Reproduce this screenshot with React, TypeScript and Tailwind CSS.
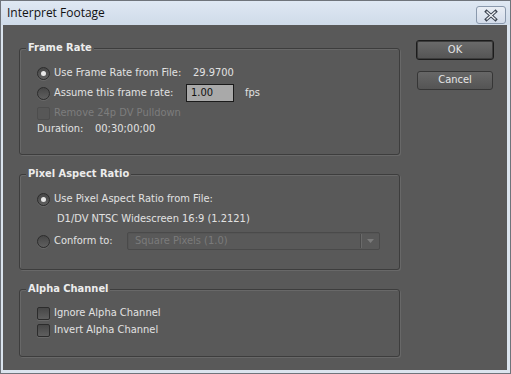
import React from "react";

const font = { fontFamily: "'DejaVu Sans Condensed', 'Liberation Sans', sans-serif" };

function Radio({ checked }: { checked?: boolean }) {
  return (
    <span className="inline-flex h-[13px] w-[13px] shrink-0 items-center justify-center rounded-full border border-[#2c2c2c] bg-[linear-gradient(#474747,#5f5f5f)] shadow-[0_1px_0_#696969]">
      {checked && <span className="h-[5px] w-[5px] rounded-full bg-[#e8e8e8]" />}
    </span>
  );
}

function Check({ disabled }: { disabled?: boolean }) {
  return (
    <span
      className={
        "inline-block h-[13px] w-[13px] shrink-0 rounded-[2px] border " +
        (disabled
          ? "border-[#4d4d4d] bg-[#575757]"
          : "border-[#2c2c2c] bg-[linear-gradient(#474747,#5f5f5f)] shadow-[0_1px_0_#696969]")
      }
    />
  );
}

function Group({ title, children, className }: { title: string; children: React.ReactNode; className?: string }) {
  return (
    <div
      className={
        "relative rounded-[3px] border border-[#3d3d3d] pl-[17px] shadow-[inset_1px_1px_0_#686868,1px_1px_0_#686868] " +
        (className ?? "")
      }
    >
      <span className="absolute left-[6px] top-[-8px] bg-[#595959] px-[2px] text-[11px] font-bold leading-[14px] text-[#ececec]">
        {title}
      </span>
      {children}
    </div>
  );
}

export default function App() {
  return (
    <div
      style={font}
      className="h-[374px] w-[511px] border border-[#6f747b] bg-[#dbe4ee] text-[11px] text-[#e2e2e2]"
    >
      <div className="flex h-[24px] items-center justify-between bg-[linear-gradient(#dfe8f3,#cfdbe9)] pl-[6px] pr-[4px]">
        <span className="text-[12px] text-[#111]" style={{ fontFamily: "'Segoe UI', 'Open Sans', sans-serif" }}>
          Interpret Footage
        </span>
        <span className="mt-[4px] flex h-[18px] w-[30px] items-center justify-center rounded-[3px] border border-[#8a99ad] bg-[linear-gradient(#e9eef5,#d3dcea)]">
          <svg width="16" height="13" viewBox="0 0 16 13">
            <path d="M3.5 2.5 L12.5 10.5 M12.5 2.5 L3.5 10.5" stroke="#3b4350" strokeWidth="3.2" strokeLinecap="square" />
            <path d="M3.5 2.5 L12.5 10.5 M12.5 2.5 L3.5 10.5" stroke="#f4f6fa" strokeWidth="1.2" />
          </svg>
        </span>
      </div>
      <div className="ml-[2px] mr-[3px] flex h-[345px] bg-[#595959]">
        <div className="ml-[16px] mt-[23px] flex w-[381px] flex-col">
          <Group title="Frame Rate" className="h-[107px] pt-[14px]">
            <div className="flex h-[20px] items-center">
              <Radio checked />
              <span className="ml-[4px] w-[139px]">Use Frame Rate from File:</span>
              <span>29.9700</span>
            </div>
            <div className="flex h-[20px] items-center">
              <Radio />
              <span className="ml-[4px] w-[132px]">Assume this frame rate:</span>
              <span className="flex h-[18px] w-[48px] items-center border border-[#1a1a1a] bg-[#a9a9a9] px-[4px] text-[#111]">
                1.00
              </span>
              <span className="ml-[11px]">fps</span>
            </div>
            <div className="mt-[2px] flex h-[16px] items-center">
              <Check disabled />
              <span className="ml-[4px] text-[#7d7d7d]">Remove 24p DV Pulldown</span>
            </div>
            <div className="flex h-[16px] items-center">
              <span className="w-[58px]">Duration:</span>
              <span>00;30;00;00</span>
            </div>
          </Group>
          <Group title="Pixel Aspect Ratio" className="mt-[19px] h-[96px] pt-[14px]">
            <div className="flex h-[20px] items-center">
              <Radio checked />
              <span className="ml-[4px]">Use Pixel Aspect Ratio from File:</span>
            </div>
            <div className="flex h-[20px] items-center pl-[20px]">D1/DV NTSC Widescreen 16:9 (1.2121)</div>
            <div className="mt-[2px] flex h-[20px] items-center">
              <Radio />
              <span className="ml-[4px] w-[73px]">Conform to:</span>
              <span className="flex h-[18px] w-[253px] items-center justify-between rounded-[2px] border border-[#4a4a4a] pl-[7px] text-[#7b7b7b] shadow-[inset_1px_1px_0_#555]">
                <span>Square Pixels (1.0)</span>
                <span className="flex h-full items-center">
                  <span className="h-[14px] w-[2px] border-l border-r border-l-[#4a4a4a] border-r-[#6a6a6a]" />
                  <svg width="17" height="8" viewBox="0 0 17 8">
                    <path d="M5 2 L12 2 L8.5 6 Z" fill="#7b7b7b" />
                  </svg>
                </span>
              </span>
            </div>
          </Group>
          <Group title="Alpha Channel" className="mt-[19px] h-[68px] pt-[15px]">
            <div className="flex h-[17px] items-center">
              <Check />
              <span className="ml-[4px]">Ignore Alpha Channel</span>
            </div>
            <div className="flex h-[17px] items-center">
              <Check />
              <span className="ml-[4px]">Invert Alpha Channel</span>
            </div>
          </Group>
        </div>
        <div className="ml-[16px] mt-[15px] flex flex-col items-start">
          <button className="h-[20px] w-[78px] rounded-[3px] border border-[#1c1c1c] bg-[linear-gradient(#6b6b6b,#545454)] text-[11px] text-[#e6e6e6] shadow-[inset_0_0_0_1px_#3c3c3c]">
            OK
          </button>
          <button className="ml-[1px] mt-[11px] h-[19px] w-[76px] rounded-[3px] border border-[#363636] bg-[linear-gradient(#676767,#545454)] text-[11px] text-[#e6e6e6]">
            Cancel
          </button>
        </div>
      </div>
    </div>
  );
}
